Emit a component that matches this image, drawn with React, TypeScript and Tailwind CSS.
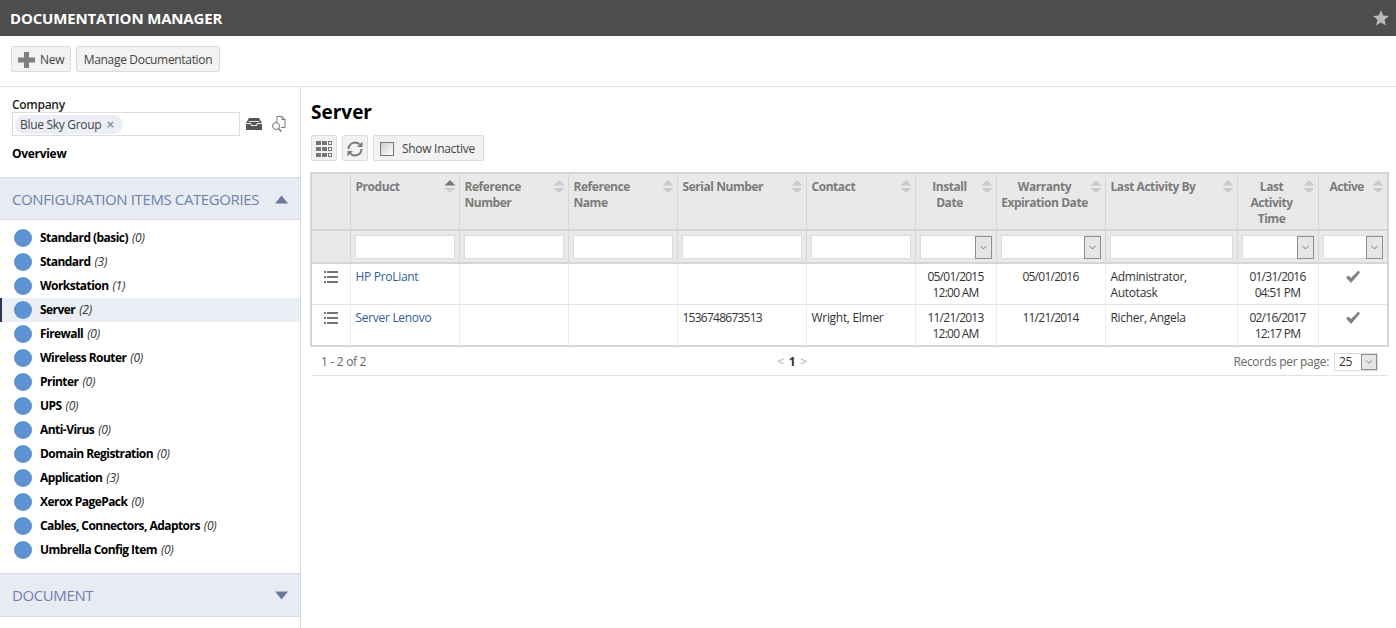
import React from "react";
import { ChevronDown, X } from "lucide-react";

const cats: [string, number][] = [
  ["Standard (basic)", 0],
  ["Standard", 3],
  ["Workstation", 1],
  ["Server", 2],
  ["Firewall", 0],
  ["Wireless Router", 0],
  ["Printer", 0],
  ["UPS", 0],
  ["Anti-Virus", 0],
  ["Domain Registration", 0],
  ["Application", 3],
  ["Xerox PagePack", 0],
  ["Cables, Connectors, Adaptors", 0],
  ["Umbrella Config Item", 0],
];

const font = "font-['Open_Sans',sans-serif]";

function Sort({ active }: { active?: boolean }) {
  return (
    <svg width="12" height="16" viewBox="0 0 12 16" className="shrink-0">
      <path d="M6 1 L11.5 6.5 H0.5 Z" fill={active ? "#777777" : "#cbcbcb"} />
      <path d="M0.5 9 H11.5 L6 14 Z" fill="#cbcbcb" />
    </svg>
  );
}

function Th({ lines, center, active, last }: { lines: string[]; center?: boolean; active?: boolean; last?: boolean }) {
  return (
    <th className={`align-top p-0 bg-[#e9e9e9] border-[#d6d6d6] border-t-2 ${last ? "border-r-2" : "border-r"} border-b-2 font-bold`}>
      <div className={`flex items-start pr-[3px] pt-[5px] h-[55px] ${center ? "pl-[3px]" : "pl-[5px]"}`}>
        <div className={`flex-1 text-[12px] leading-[16px] text-[#7b7b7b] tracking-[-0.45px] ${center ? "text-center" : "text-left"}`}>
          {lines.map((l) => (
            <div key={l} className="whitespace-nowrap">{l}</div>
          ))}
        </div>
        <Sort active={active} />
      </div>
    </th>
  );
}

function FilterInput({ last }: { last?: boolean }) {
  return (
    <td className={`p-0 bg-[#e9e9e9] border-[#d6d6d6] ${last ? "border-r-2" : "border-r"} border-b-2`}>
      <div className="h-[31px] flex items-center px-[4px]">
        <div className="w-full h-[24px] bg-white border border-[#dcdcdc]" />
      </div>
    </td>
  );
}

function FilterSelect({ last }: { last?: boolean }) {
  return (
    <td className={`p-0 bg-[#e9e9e9] border-[#d6d6d6] ${last ? "border-r-2" : "border-r"} border-b-2`}>
      <div className="h-[31px] flex items-center px-[4px]">
        <div className="w-full h-[24px] bg-white border border-[#dcdcdc] flex justify-end">
          <div className="w-[17px] h-[23px] -mr-px bg-[#e6e6e6] border border-[#8f8f8f] flex items-center justify-center">
            <ChevronDown size={11} strokeWidth={1.5} className="text-[#444]" />
          </div>
        </div>
      </div>
    </td>
  );
}

function Td({ children, center, last, bottom, numeric }: { children?: React.ReactNode; center?: boolean; last?: boolean; bottom?: boolean; numeric?: boolean }) {
  return (
    <td
      className={`p-0 align-top border-[#ececec] ${last ? "border-r-2 border-r-[#d6d6d6]" : "border-r"} ${bottom ? "border-b-2 border-b-[#d6d6d6]" : "border-b border-b-[#e4e4e4]"}`}
    >
      <div className={`pt-[5px] h-[40px] text-[12px] leading-[16px] text-[#333] ${numeric ? "tracking-[-0.75px]" : "tracking-[-0.3px]"} ${center ? "px-[4px] text-center" : "pl-[5px] pr-[3px] text-left"}`}>
        {children}
      </div>
    </td>
  );
}

function ListIcon() {
  return (
    <svg width="14" height="12" viewBox="0 0 14 12" fill="#757575">
      <rect x="0" y="0" width="2" height="2" />
      <rect x="3" y="0" width="11" height="2" />
      <rect x="0" y="5" width="2" height="2" />
      <rect x="3" y="5" width="11" height="2" />
      <rect x="0" y="10" width="2" height="2" />
      <rect x="3" y="10" width="11" height="2" />
    </svg>
  );
}

function CheckIcon() {
  return (
    <svg width="16" height="14" viewBox="0 0 16 14" className="mx-auto mt-[1px]">
      <path d="M1 7.5 L3.5 5.5 L6 8 L13.5 0.5 L15 2.5 L6 13 Z" fill="#808080" />
    </svg>
  );
}

function Row({ cells, bottom }: { cells: { product: string; serial?: string; contact?: string; install: string[]; warranty: string; by: string[]; time: string[] }; bottom?: boolean }) {
  return (
    <tr>
      <td className={`p-0 align-top border-l-2 border-l-[#d6d6d6] border-r border-r-[#ececec] ${bottom ? "border-b-2 border-b-[#d6d6d6]" : "border-b border-b-[#e4e4e4]"}`}>
        <div className="h-[40px] flex justify-center pt-[7px]">
          <ListIcon />
        </div>
      </td>
      <Td bottom={bottom}>
        <span className="text-[#2f5c9e]">{cells.product}</span>
      </Td>
      <Td bottom={bottom} />
      <Td bottom={bottom} />
      <Td bottom={bottom} numeric>{cells.serial}</Td>
      <Td bottom={bottom}>{cells.contact}</Td>
      <Td bottom={bottom} center numeric>
        {cells.install.map((x) => <div key={x}>{x}</div>)}
      </Td>
      <Td bottom={bottom} center numeric>{cells.warranty}</Td>
      <Td bottom={bottom}>
        {cells.by.map((x) => <div key={x}>{x}</div>)}
      </Td>
      <Td bottom={bottom} center numeric>
        {cells.time.map((x) => <div key={x}>{x}</div>)}
      </Td>
      <Td bottom={bottom} last center>
        <CheckIcon />
      </Td>
    </tr>
  );
}

function Btn({ children, className = "" }: { children: React.ReactNode; className?: string }) {
  return (
    <div className={`h-[26px] flex items-center bg-[#f2f2f2] border border-[#dcdcdc] rounded-[2px] text-[12px] leading-[16px] text-[#444] pt-px ${className}`}>
      {children}
    </div>
  );
}

function Triangle({ up }: { up?: boolean }) {
  return (
    <svg width="13" height="9" viewBox="0 0 13 9">
      <path d={up ? "M6.5 0.5 L13 8.5 H0 Z" : "M0 0.5 H13 L6.5 8.5 Z"} fill="#6b7a9c" />
    </svg>
  );
}

export default function App() {
  return (
    <div className={`${font} w-[1396px] h-[628px] overflow-hidden bg-white flex flex-col`}>
      <div className="h-[36px] bg-[#4d4d4d] flex items-center justify-between pl-[10px] pr-[7px] shrink-0">
        <div className="text-white font-bold text-[15px] tracking-[-0.16px]">DOCUMENTATION MANAGER</div>
        <svg width="16" height="16" viewBox="0 0 16 16">
          <path d="M8 0 L10.2 5.6 L16 6 L11.5 9.7 L13 15.6 L8 12.4 L3 15.6 L4.5 9.7 L0 6 L5.8 5.6 Z" fill="#b8b8b8" />
        </svg>
      </div>

      <div className="h-[51px] shrink-0 border-b border-[#dfe1e8] flex items-start pt-[10px] pl-[11px] gap-[5px]">
        <Btn className="w-[60px] pl-[6px] gap-[5px] tracking-[-0.3px]">
          <svg width="17" height="16" viewBox="0 0 17 16">
            <path d="M6 0 H11 V5.5 H17 V10.5 H11 V16 H6 V10.5 H0 V5.5 H6 Z" fill="#808080" />
          </svg>
          <span>New</span>
        </Btn>
        <Btn className="w-[144px] justify-center tracking-[-0.32px]">Manage Documentation</Btn>
      </div>

      <div className="flex flex-1 min-h-0">
        <div className="w-[301px] shrink-0 border-r border-[#d5d9e5] flex flex-col">
          <div className="h-[90px] shrink-0 pl-[12px] pt-[10px]">
            <div className="text-[12px] leading-[15px] font-semibold text-[#222] tracking-[-0.3px]">Company</div>
            <div className="flex items-center">
              <div className="w-[228px] h-[24px] border border-[#dcdcdc] flex items-center pl-[2px]">
                <div className="h-[19px] w-[108px] rounded-full bg-[#eceef5] flex items-center pl-[5px] pt-px gap-[5px] text-[12px] leading-[16px] text-[#444] tracking-[-0.3px]">
                  <span>Blue Sky Group</span>
                  <X size={9} strokeWidth={4} className="text-[#8b93a8]" />
                </div>
              </div>
              <svg width="18" height="14" viewBox="0 0 18 14" className="ml-[5px]">
                <path d="M4 1 H14 L17 6 V13 H1 V6 Z" fill="#555" />
                <path d="M3.5 4 H14.5 V5 H3.5 Z" fill="#ddd" />
                <path d="M1 6.5 H6 V8.5 H12 V6.5 H17" stroke="#eee" fill="none" />
              </svg>
              <svg width="16" height="18" viewBox="0 0 16 18" className="ml-[7px]" fill="none" stroke="#777">
                <path d="M7 7 V1.5 H12 L15 4.5 V12.5 H11" />
                <path d="M12 1.5 V4.5 H15" />
                <circle cx="6" cy="11" r="3.5" />
                <path d="M8.5 13.5 L11.5 16.5" strokeWidth="1.5" />
              </svg>
            </div>
            <div className="mt-[10px] text-[12px] leading-[16px] font-bold text-black tracking-[-0.3px]">Overview</div>
          </div>

          <div className="h-[43px] shrink-0 pt-px bg-[#e8ebf3] border-y border-[#d9dce6] flex items-center justify-between pl-[12px] pr-[12px]">
            <span className="text-[15px] text-[#6f83a8] tracking-[-0.39px]">CONFIGURATION ITEMS CATEGORIES</span>
            <Triangle up />
          </div>

          <div className="h-[353px] shrink-0 pt-[6px]">
            {cats.map(([name, n]) => {
              const sel = name === "Server";
              return (
                <div
                  key={name}
                  className={`h-[24px] flex items-center text-[12px] ${sel ? "bg-[#eceef5] border-l-2 border-[#2d3350] pl-[12px]" : "pl-[14px]"}`}
                >
                  <span className="w-[18px] h-[18px] rounded-full bg-[#5b93d3] shrink-0 mr-[8px]" />
                  <span className="font-bold text-black tracking-[-0.55px]">{name}</span>
                  <span className="italic text-[#333] ml-[4px] tracking-[-0.3px]">({n})</span>
                </div>
              );
            })}
          </div>

          <div className="h-[44px] shrink-0 bg-[#e8ebf3] border-y border-[#d9dce6] flex items-center justify-between pl-[12px] pr-[12px]">
            <span className="text-[15px] text-[#6f83a8] tracking-[-0.39px]">DOCUMENT</span>
            <Triangle />
          </div>
        </div>

        <div className="flex-1 min-w-0 pl-[10px] pr-[8px]">
          <div className="h-[48px] pt-[12px] text-[19px] leading-[26px] font-bold text-black">Server</div>
          <div className="flex gap-[5px] h-[26px]">
            <Btn className="w-[26px] justify-center">
              <svg width="16" height="16" viewBox="0 0 16 16">
                {[0, 6, 12].flatMap((y) =>
                  [0, 6, 12].map((x) =>
                    x === 12 ? (
                      <rect key={`${x}${y}`} x={x + 0.5} y={y + 0.5} width="3" height="3" fill="none" stroke="#777" />
                    ) : (
                      <rect key={`${x}${y}`} x={x} y={y} width="5" height="4" fill="#777" />
                    )
                  )
                )}
              </svg>
            </Btn>
            <Btn className="w-[26px] justify-center">
              <svg width="16" height="16" viewBox="0 0 16 16" fill="none" stroke="#7a7a7a" strokeWidth="2">
                <path d="M1.5 8 A6.5 6.5 0 0 1 12.5 3.4" />
                <path d="M14.5 8 A6.5 6.5 0 0 1 3.5 12.6" />
                <path d="M15.5 0.5 V6 H10 Z" fill="#7a7a7a" stroke="none" />
                <path d="M0.5 15.5 V10 H6 Z" fill="#7a7a7a" stroke="none" />
              </svg>
            </Btn>
            <Btn className="w-[111px] pl-[6px] gap-[8px] tracking-[-0.3px]">
              <span className="w-[14px] h-[14px] border border-[#777] bg-gradient-to-br from-[#cfcfcf] to-white" />
              <span>Show Inactive</span>
            </Btn>
          </div>

          <table className="mt-[11px] -ml-px border-collapse table-fixed w-[1077px]">
            <colgroup>
              {[39, 109, 109, 109, 129, 109, 81, 109, 132, 81, 70].map((w, i) => (
                <col key={i} style={{ width: w }} />
              ))}
            </colgroup>
            <thead>
              <tr>
                <th className="p-0 bg-[#e9e9e9] border-[#d6d6d6] border-t-2 border-l-2 border-r border-b-2" />
                <Th lines={["Product"]} active />
                <Th lines={["Reference", "Number"]} />
                <Th lines={["Reference", "Name"]} />
                <Th lines={["Serial Number"]} />
                <Th lines={["Contact"]} />
                <Th lines={["Install", "Date"]} center />
                <Th lines={["Warranty", "Expiration Date"]} center />
                <Th lines={["Last Activity By"]} />
                <Th lines={["Last", "Activity", "Time"]} center />
                <Th lines={["Active"]} center last />
              </tr>
              <tr>
                <td className="p-0 bg-[#e9e9e9] border-[#d6d6d6] border-l-2 border-r border-b-2" />
                <FilterInput />
                <FilterInput />
                <FilterInput />
                <FilterInput />
                <FilterInput />
                <FilterSelect />
                <FilterSelect />
                <FilterInput />
                <FilterSelect />
                <FilterSelect last />
              </tr>
            </thead>
            <tbody>
              <Row
                cells={{
                  product: "HP ProLiant",
                  install: ["05/01/2015", "12:00 AM"],
                  warranty: "05/01/2016",
                  by: ["Administrator,", "Autotask"],
                  time: ["01/31/2016", "04:51 PM"],
                }}
              />
              <Row
                bottom
                cells={{
                  product: "Server Lenovo",
                  serial: "1536748673513",
                  contact: "Wright, Elmer",
                  install: ["11/21/2013", "12:00 AM"],
                  warranty: "11/21/2014",
                  by: ["Richer, Angela"],
                  time: ["02/16/2017", "12:17 PM"],
                }}
              />
            </tbody>
          </table>

          <div className="w-[1077px] h-[29px] pt-[2px] border-b border-[#e2e2e2] flex items-center text-[12px] text-[#666] tracking-[-0.3px]">
            <div className="flex-1 pl-[10px]">1 - 2 of 2</div>
            <div className="flex-1 flex items-center gap-[5px] text-[#aaa]">
              <span>&lt;</span>
              <span className="font-bold text-[#333]">1</span>
              <span>&gt;</span>
            </div>
            <div className="flex items-center pr-[10px]">
              <span className="mr-[5px]">Records per page:</span>
              <div className="w-[44px] h-[18px] border border-[#dcdcdc] flex items-center justify-between pl-[4px] text-[#333]">
                <span>25</span>
                <div className="w-[16px] h-[16px] bg-[#e6e6e6] border border-[#8f8f8f] flex items-center justify-center">
                  <ChevronDown size={10} strokeWidth={1.5} className="text-[#444]" />
                </div>
              </div>
            </div>
          </div>
        </div>
      </div>
    </div>
  );
}
